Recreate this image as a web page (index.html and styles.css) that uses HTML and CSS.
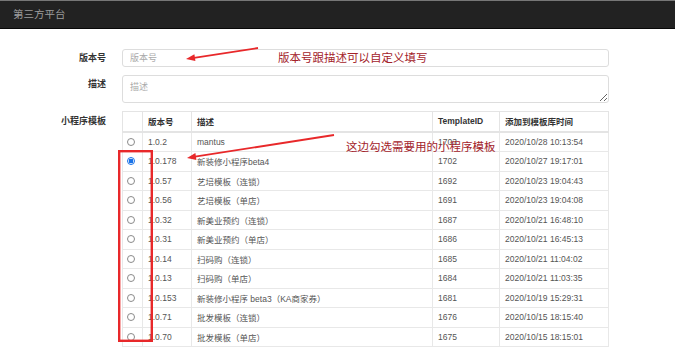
FILE: index.html
```html
<!DOCTYPE html>
<html lang="zh-CN">
<head>
  <meta charset="UTF-8">
  <title>第三方平台</title>
  <link rel="stylesheet" href="styles.css">
</head>
<body>
  <div class="page">
    <div class="navbar">第三方平台</div>

    <form class="form">
      <label class="label">版本号</label>
      <input class="field" type="text" placeholder="版本号">

      <label class="label">描述</label>
      <textarea class="field area" placeholder="描述"></textarea>

      <label class="label label-table">小程序模板</label>
      <table class="tpl-table">
        <colgroup>
          <col style="width:20px">
          <col style="width:49px">
          <col style="width:241px">
          <col style="width:67px">
          <col>
        </colgroup>
        <thead>
          <tr><th></th><th>版本号</th><th>描述</th><th>TemplateID</th><th>添加到模板库时间</th></tr>
        </thead>
        <tbody>
          <tr><td><input type="radio" name="tpl"></td><td>1.0.2</td><td>mantus</td><td>1703</td><td>2020/10/28 10:13:54</td></tr>
          <tr><td><input type="radio" name="tpl" checked></td><td>1.0.178</td><td>新装修小程序beta4</td><td>1702</td><td>2020/10/27 19:17:01</td></tr>
          <tr><td><input type="radio" name="tpl"></td><td>1.0.57</td><td>艺培模板（连锁）</td><td>1692</td><td>2020/10/23 19:04:43</td></tr>
          <tr><td><input type="radio" name="tpl"></td><td>1.0.56</td><td>艺培模板（单店）</td><td>1691</td><td>2020/10/23 19:04:08</td></tr>
          <tr><td><input type="radio" name="tpl"></td><td>1.0.32</td><td>新美业预约（连锁）</td><td>1687</td><td>2020/10/21 16:48:10</td></tr>
          <tr><td><input type="radio" name="tpl"></td><td>1.0.31</td><td>新美业预约（单店）</td><td>1686</td><td>2020/10/21 16:45:13</td></tr>
          <tr><td><input type="radio" name="tpl"></td><td>1.0.14</td><td>扫码购（连锁）</td><td>1685</td><td>2020/10/21 11:04:02</td></tr>
          <tr><td><input type="radio" name="tpl"></td><td>1.0.13</td><td>扫码购（单店）</td><td>1684</td><td>2020/10/21 11:03:35</td></tr>
          <tr><td><input type="radio" name="tpl"></td><td>1.0.153</td><td>新装修小程序 beta3（KA商家券）</td><td>1681</td><td>2020/10/19 15:29:31</td></tr>
          <tr><td><input type="radio" name="tpl"></td><td>1.0.71</td><td>批发模板（连锁）</td><td>1676</td><td>2020/10/15 18:15:40</td></tr>
          <tr><td><input type="radio" name="tpl"></td><td>1.0.70</td><td>批发模板（单店）</td><td>1675</td><td>2020/10/15 18:15:01</td></tr>
        </tbody>
      </table>
    </form>

    <!-- annotations drawn over the screenshot -->
    <svg class="marks" width="675" height="349" viewBox="0 0 675 349">
      <line x1="258" y1="48" x2="194" y2="57.8" stroke="#e8282a" stroke-width="1.8"/>
      <polygon points="186,59 195.4,61.1 194.4,54.2" fill="#e8282a"/>
      <line x1="334" y1="135" x2="195" y2="156.7" stroke="#e8282a" stroke-width="1.8"/>
      <polygon points="187,158 196.4,160.1 195.4,153.1" fill="#e8282a"/>
      <rect x="119.2" y="151.2" width="32.6" height="189.6" fill="none" stroke="#e8282a" stroke-width="2.4"/>
    </svg>
    <span class="note note-top">版本号跟描述可以自定义填写</span>
    <span class="note note-table">这边勾选需要用的小程序模板</span>
  </div>
</body>
</html>
```

FILE: styles.css
```css
body {
  margin: 0;
  background: #fff;
  font-family: "Liberation Sans", Arial, "Noto Sans CJK SC", sans-serif;
  overflow: hidden;
}

.page {
  position: relative;
  height: 349px;
}

.navbar {
  height: 27px;
  line-height: 27px;
  background: #222;
  border-top: 1px solid #777;
  border-bottom: 1px solid #080808;
  color: #9d9d9d;
  font-size: 10.5px;
  padding-left: 13px;
}

.form {
  display: grid;
  grid-template-columns: 106px 487px;
  column-gap: 16px;
  row-gap: 8px;
  margin-top: 20px;
}

.label {
  text-align: right;
  font-size: 9px;
  font-weight: bold;
  color: #333;
  line-height: 18px;
}

.label-table {
  line-height: 20px;
}

.field {
  box-sizing: border-box;
  width: 100%;
  height: 18px;
  margin: 0;
  border: 1px solid #ddd;
  border-radius: 3px;
  padding: 0 7px;
  font-family: inherit;
  font-size: 9px;
  color: #555;
}

.field::placeholder {
  color: #aaa;
}

.area {
  height: 28px;
  padding-top: 4px;
  resize: vertical;
}

.tpl-table {
  width: 487px;
  table-layout: fixed;
  border-collapse: collapse;
  border: 1px solid #e4e4e4;
  font-size: 8.5px;
  color: #555;
}

.tpl-table th {
  height: 18.5px;
  padding: 0 5px;
  text-align: left;
  font-weight: bold;
  color: #333;
  border: 1px solid #e4e4e4;
  border-bottom-width: 2px;
}

.tpl-table td {
  height: 18.5px;
  padding: 0 5px;
  border: 1px solid #e8e8e8;
  white-space: nowrap;
  overflow: hidden;
}

.tpl-table td:first-child {
  padding-left: 4px;
}

.tpl-table input[type="radio"] {
  appearance: none;
  display: block;
  width: 8px;
  height: 8px;
  margin: 0;
  border: 1px solid #8a8a8a;
  border-radius: 50%;
  background: #fff;
}

.tpl-table input[type="radio"]:checked {
  border-color: #1a73e8;
  background: radial-gradient(circle, #1a73e8 0 2.2px, #fff 2.6px);
}

.marks {
  position: absolute;
  left: 0;
  top: 0;
  pointer-events: none;
}

.note {
  position: absolute;
  font-size: 11.5px;
  color: #a3222a;
  white-space: nowrap;
  font-family: "Noto Sans CJK SC", sans-serif;
  line-height: 14px;
}

.note-top {
  left: 278px;
  top: 50px;
}

.note-table {
  left: 346px;
  top: 139px;
}
```
